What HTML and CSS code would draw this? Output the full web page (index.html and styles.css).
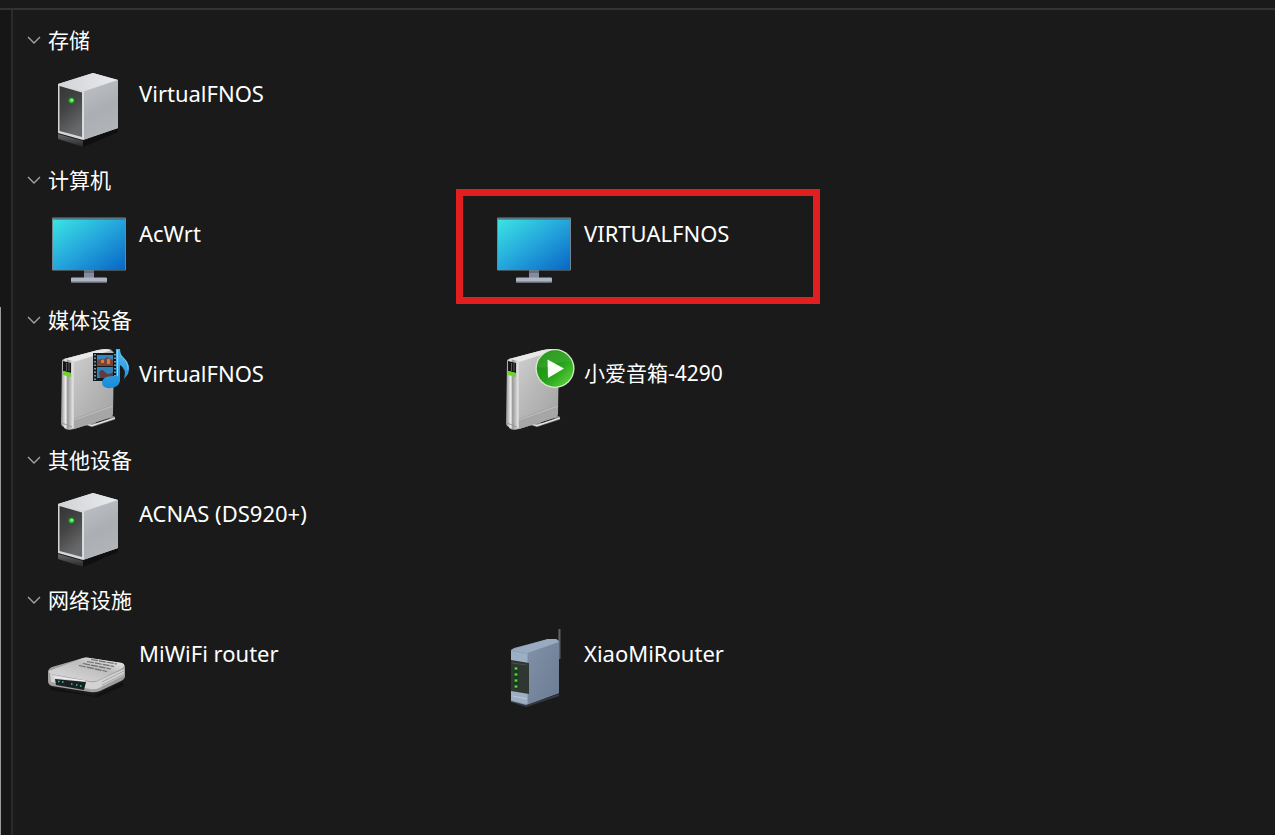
FILE: index.html
```html
<!DOCTYPE html>
<html lang="zh-CN">
<head>
    <meta charset="UTF-8">
    <meta name="viewport" content="width=device-width, initial-scale=1.0">
    <title>网络</title>
    <link rel="stylesheet" href="styles.css">
</head>
<body>
    <!-- 图标定义 -->
    <svg class="icon-defs" width="0" height="0" aria-hidden="true">
        <defs>
            <linearGradient id="serverFront" x1="0" y1="0" x2="0.4" y2="1">
                <stop offset="0" stop-color="#333435"/><stop offset="0.5" stop-color="#454546"/><stop offset="1" stop-color="#68696a"/>
            </linearGradient>
            <linearGradient id="serverSide" x1="0" y1="0" x2="0.3" y2="1">
                <stop offset="0" stop-color="#bec0c4"/><stop offset="0.6" stop-color="#abafb3"/><stop offset="1" stop-color="#b0b3b7"/>
            </linearGradient>
            <linearGradient id="serverTop" x1="0" y1="0" x2="1" y2="0">
                <stop offset="0" stop-color="#d2d3d6"/><stop offset="1" stop-color="#e9eaed"/>
            </linearGradient>
            <linearGradient id="shade" x1="0" y1="0" x2="0" y2="1">
                <stop offset="0" stop-color="#6a6a6a"/><stop offset="1" stop-color="#242424"/>
            </linearGradient>
            <linearGradient id="screen" x1="0" y1="0" x2="1" y2="1">
                <stop offset="0" stop-color="#3be5e2"/><stop offset="0.5" stop-color="#24a5dc"/><stop offset="1" stop-color="#0866c4"/>
            </linearGradient>
            <linearGradient id="panel" x1="0" y1="0" x2="1" y2="1">
                <stop offset="0" stop-color="#d5d5d5"/><stop offset="0.5" stop-color="#b8b8b8"/><stop offset="1" stop-color="#a0a0a0"/>
            </linearGradient>
            <linearGradient id="edge" x1="0" y1="0" x2="1" y2="0">
                <stop offset="0" stop-color="#8e8e8e"/><stop offset="0.4" stop-color="#f1f1f1"/><stop offset="0.55" stop-color="#999"/><stop offset="1" stop-color="#e2e2e2"/>
            </linearGradient>
            <linearGradient id="note" x1="0" y1="0" x2="0" y2="1">
                <stop offset="0" stop-color="#55b8ec"/><stop offset="1" stop-color="#168bd6"/>
            </linearGradient>
            <linearGradient id="play" x1="0" y1="0" x2="1" y2="1">
                <stop offset="0" stop-color="#188810"/><stop offset="0.55" stop-color="#26a319"/><stop offset="1" stop-color="#69dc45"/>
            </linearGradient>
            <linearGradient id="modemTop" x1="0" y1="1" x2="1" y2="0">
                <stop offset="0" stop-color="#dedede"/><stop offset="0.6" stop-color="#bdbdbd"/><stop offset="1" stop-color="#f0f0f0"/>
            </linearGradient>
            <linearGradient id="routerSide" x1="0" y1="0" x2="1" y2="1">
                <stop offset="0" stop-color="#8090a6"/><stop offset="1" stop-color="#6c7c94"/>
            </linearGradient>
        </defs>

        <symbol id="icon-server" viewBox="3 0 96 100">
            <path d="M18 74 43 81V87L18 79z" fill="url(#shade)"/>
            <path d="M43 81 78 68V72L48 85 43 87z" fill="#0f0f0f"/>
            <path d="M18 24 53 13 78 20V68L43 80 18 73z" fill="#d5d7d9"/>
            <path d="M18 24 53 13 78 20 43 31z" fill="url(#serverTop)"/>
            <path d="M44 31.500 78 20V68L44 79.500z" fill="url(#serverSide)"/>
            <path d="M19.500 26 42 32.500V77L19.500 71z" fill="url(#serverFront)"/>
            <path d="M43.500 32v47" stroke="#dcdee0"/>
            <circle cx="31.500" cy="40.500" r="3.300" fill="#137e20"/>
            <circle cx="31.500" cy="40.500" r="2.300" fill="#49d84d"/>
            <circle cx="32" cy="40" r="0.900" fill="#b9ffae"/>
        </symbol>

        <symbol id="icon-computer" viewBox="3 0 96 100">
            <path d="M44 70h10v8H44z" fill="#828c9c"/>
            <path d="M44 70h10v3H44z" fill="#647080"/>
            <rect x="31" y="77.500" width="36" height="5" rx="1" fill="#aeb5c1"/>
            <path d="M31 81.500h36v1H31z" fill="#697383"/>
            <rect x="12" y="17.500" width="74" height="53" rx="1" fill="#6f8794"/>
            <rect x="13" y="19" width="72" height="51" fill="url(#screen)"/>
            <path d="M13 19h72" stroke="#326875"/>
        </symbol>

        <symbol id="icon-drive" viewBox="3 0 96 100">
            <path d="M45 83 71 74.500 75 77V79.500L52 87 45 85z" fill="#8d8d8d"/>
            <path d="M55 82 68 77.500 70 78.500 57 83z" fill="#222"/>
            <path d="M45 83.500 52 85.500 75 78" fill="none" stroke="#ececec" stroke-width="1.200"/>
            <path d="M24 19 58 10Q74 8 74 14L73 73Q73 76 69 78L34 89Q27 91 24 88z" fill="url(#panel)"/>
            <path d="M24 19 58 10Q66 8 72 10L34 22z" fill="#e8e8e8"/>
            <path d="M33 79 73 64V73Q73 76 69 78L34 89z" fill="#a6a6a6"/>
            <path d="M34 80 73 66" stroke="#c9c9c9" stroke-width="0.700"/>
            <path d="M22 21Q22 19 25 19L33 21V86Q33 90 28 89L24 87Q21 86 21 83z" fill="url(#edge)"/>
            <path d="M33 22V88" stroke="#dedede" stroke-width="1.500"/>
            <path d="M23 21 31 23V33L23 31z" fill="#161616"/>
            <path d="M26.500 23v8M29 23v8" stroke="#777" stroke-width="0.700"/>
            <path d="M23 31 31 33V37L23 35z" fill="#6cd525"/>
            <path d="M22 83 32 87" stroke="#999"/>
        </symbol>

        <symbol id="icon-media" viewBox="3 0 96 100">
            <use href="#icon-drive" x="3" y="0" width="96" height="100"/>
            <path d="M53 13H77V41H53z" fill="#121a20"/>
            <path d="M57 15H73V26H57z" fill="#3288bd"/>
            <path d="M57 27H73V38H57z" fill="#2f83b8"/>
            <path d="M57 20q4-2 6 0l4-3 6 3v6H57z" fill="#7a4537"/>
            <path d="M61 20h3v3h-3zM67 19h3v5h-3z" fill="#d77948"/>
            <path d="M59 32q3-4 6 0t8 0v6H60z" fill="#633b3e"/>
            <path d="M55 14v27M75 14v27" stroke="#a9b7bd" stroke-width="1.500" stroke-dasharray="1.500 2"/>
            <path d="M76 9H80Q80 15 85 19Q91 25 88 34L84 39Q87 29 80 25V41Q79 47 71 48Q62 49 62 42Q63 35 76 36z" fill="url(#note)"/>
            <path d="M77.500 10V36" stroke="#91d5f5" stroke-width="1"/>
            <path d="M80 15Q89 22 88 30" fill="none" stroke="#79cbf3" stroke-width="1"/>
        </symbol>

        <symbol id="icon-player" viewBox="3 0 96 100">
            <use href="#icon-drive" x="3" y="0" width="96" height="100"/>
            <circle cx="70" cy="28.500" r="19.500" fill="#d5ebcc"/>
            <circle cx="70" cy="28.500" r="18.200" fill="url(#play)"/>
            <path d="M52 27Q54 12 70 11Q83 12 87 22Q74 21 65 26Q58 29 52 27z" fill="#66bb58" opacity="0.250"/>
            <path d="M62.500 19.500 79 28.500 63 38z" fill="#f8fff5"/>
        </symbol>

        <symbol id="icon-modem" viewBox="3 0 96 100">
            <path d="M10 67 54 76 83 62V66L58 77 10 70z" fill="#111"/>
            <path d="M8 52Q8 49 12 47L43 38Q46 37 50 38L82 43Q85 44 85 48V56Q85 59 81 61L60 71Q55 73 50 72L12 66Q8 65 8 61z" fill="#a1a1a1"/>
            <path d="M9 51 43 38Q46 37 50 38L82 43Q87 45 81 49L61 59Q56 62 49 61L12 54Q9 54 9 51z" fill="url(#modemTop)"/>
            <path d="M51 39.500 77 44M47 41.500 74 46.500M43 43.500 71 49M39 45.500 67 51.500" stroke="#6e6e6e" stroke-width="1.200" stroke-dasharray="7 1"/>
            <path d="M10 54 50 62Q55 63 60 60L84 49V55L59 68Q55 70 50 69L11 62z" fill="#d3d3d3"/>
            <path d="M62 62 84 51M62 65 84 54M62 68 83 58" stroke="#999" stroke-width="0.800"/>
            <path d="M15 59 46 62 44 70 16 65z" fill="#172022"/>
            <path d="M14 57 45 61" stroke="#f5f5f5"/>
            <path d="M18 61.500h1.500M22 62h1.500M31 64h1.500M36 65h1.500M40 66h1.500" stroke="#52bda0" stroke-width="1.700"/>
        </symbol>

        <symbol id="icon-router" viewBox="3 0 96 100">
            <path d="M73.500 9H75.500V39H73z" fill="#5c6268"/>
            <path d="M26 81 41 86 74 75" fill="none" stroke="#343a43" stroke-width="2"/>
            <path d="M26 30 29 28 63 19H71Q74 20 74 23V73L41 85 26 81z" fill="#8e9fb5"/>
            <path d="M26 30 63 19H71L74 22 42 33z" fill="#9aabc0"/>
            <path d="M43 33 74 22V73L43 84z" fill="url(#routerSide)"/>
            <path d="M26 31 42 34V84L26 80z" fill="#9dafc5"/>
            <path d="M26 40 44 43V74L26 71z" fill="#303632"/>
            <path d="M27 43 42 45" stroke="#495047"/>
            <path d="M31 47v22" stroke="#183b1b" stroke-width="5"/>
            <path d="M31 47v3M31 53v3M31 59v3M31 65v3" stroke="#27a52d" stroke-width="3"/>
            <path d="M31 48v1M31 54v1M31 60v1M31 66v1" stroke="#73d752" stroke-width="2"/>
            <path d="M28 76 42 79" stroke="#c0cad8" stroke-width="1"/>
        </symbol>
    </svg>

    <div class="top-bar"></div>
    <div class="explorer">
        <div class="side-rail"><div class="side-thumb"></div></div>
        <main class="content">
            <section class="group">
                <button class="group-title" type="button">
                    <svg class="chevron" viewBox="0 0 14 8" aria-hidden="true"><path d="M1 1l6 6 6-6"/></svg>
                    <span>存储</span>
                </button>
                <div class="device-list">
                    <a class="device" href="#">
                        <svg class="device-icon" aria-hidden="true"><use href="#icon-server"/></svg>
                        <span class="device-name">VirtualFNOS</span>
                    </a>
                </div>
            </section>
            <section class="group">
                <button class="group-title" type="button">
                    <svg class="chevron" viewBox="0 0 14 8" aria-hidden="true"><path d="M1 1l6 6 6-6"/></svg>
                    <span>计算机</span>
                </button>
                <div class="device-list">
                    <a class="device" href="#">
                        <svg class="device-icon" aria-hidden="true"><use href="#icon-computer"/></svg>
                        <span class="device-name">AcWrt</span>
                    </a>
                    <a class="device device-marked" href="#">
                        <svg class="device-icon" aria-hidden="true"><use href="#icon-computer"/></svg>
                        <span class="device-name">VIRTUALFNOS</span>
                    </a>
                </div>
            </section>
            <section class="group">
                <button class="group-title" type="button">
                    <svg class="chevron" viewBox="0 0 14 8" aria-hidden="true"><path d="M1 1l6 6 6-6"/></svg>
                    <span>媒体设备</span>
                </button>
                <div class="device-list">
                    <a class="device" href="#">
                        <svg class="device-icon" aria-hidden="true"><use href="#icon-media"/></svg>
                        <span class="device-name">VirtualFNOS</span>
                    </a>
                    <a class="device" href="#">
                        <svg class="device-icon" aria-hidden="true"><use href="#icon-player"/></svg>
                        <span class="device-name name-cn">小爱音箱-4290</span>
                    </a>
                </div>
            </section>
            <section class="group">
                <button class="group-title" type="button">
                    <svg class="chevron" viewBox="0 0 14 8" aria-hidden="true"><path d="M1 1l6 6 6-6"/></svg>
                    <span>其他设备</span>
                </button>
                <div class="device-list">
                    <a class="device" href="#">
                        <svg class="device-icon" aria-hidden="true"><use href="#icon-server"/></svg>
                        <span class="device-name">ACNAS (DS920+)</span>
                    </a>
                </div>
            </section>
            <section class="group">
                <button class="group-title" type="button">
                    <svg class="chevron" viewBox="0 0 14 8" aria-hidden="true"><path d="M1 1l6 6 6-6"/></svg>
                    <span>网络设施</span>
                </button>
                <div class="device-list">
                    <a class="device" href="#">
                        <svg class="device-icon" aria-hidden="true"><use href="#icon-modem"/></svg>
                        <span class="device-name">MiWiFi router</span>
                    </a>
                    <a class="device" href="#">
                        <svg class="device-icon" aria-hidden="true"><use href="#icon-router"/></svg>
                        <span class="device-name">XiaoMiRouter</span>
                    </a>
                </div>
            </section>
        </main>
    </div>
</body>
</html>
```
FILE: styles.css
```css
* {
    box-sizing: border-box;
}
body {
    margin: 0;
    min-height: 100vh;
    display: flex;
    flex-direction: column;
    background: #1a1a1a;
    color: #fff;
    font-family: "Noto Sans", "Noto Sans CJK SC", sans-serif;
    font-size: 21px;
    line-height: 28px;
}
.icon-defs {
    position: absolute;
}
.top-bar {
    height: 10px;
    border-bottom: 2px solid #333;
}
.explorer {
    flex: 1;
    display: flex;
}
.side-rail {
    display: flex;
    flex-direction: column;
    justify-content: flex-end;
    width: 13px;
    background: #161616;
    border-right: 2px solid #2b2b2b;
}
.side-thumb {
    width: 1px;
    height: 64%;
    background: #9a9a9a;
}
.content {
    flex: 1;
    min-width: 0;
    padding: 10px 0 0 14px;
}
/* 分组标题 */
.group-title {
    display: flex;
    align-items: center;
    gap: 7px;
    width: 100%;
    height: 40px;
    padding: 0;
    border: none;
    background: none;
    color: #fff;
    font: inherit;
    text-align: left;
}
.chevron {
    width: 14px;
    height: 8px;
    fill: none;
    stroke: #a6a6a6;
    stroke-width: 1.3;
}
/* 设备列表 */
.device-list {
    display: grid;
    grid-template-columns: repeat(auto-fill, 445px);
    padding-left: 16px;
}
.device {
    position: relative;
    display: flex;
    height: 100px;
    color: #fff;
    text-decoration: none;
}
.device-icon {
    flex: none;
    width: 96px;
    height: 100px;
}
.device-name {
    padding-top: 19px;
    font-size: 22px;
}
.name-cn {
    font-size: 21px;
}
/* 红色标注框 */
.device-marked::after {
    content: "";
    position: absolute;
    top: -11px;
    left: -32px;
    box-sizing: border-box;
    width: 364px;
    height: 115px;
    border: 7px solid #e11f21;
}
```
